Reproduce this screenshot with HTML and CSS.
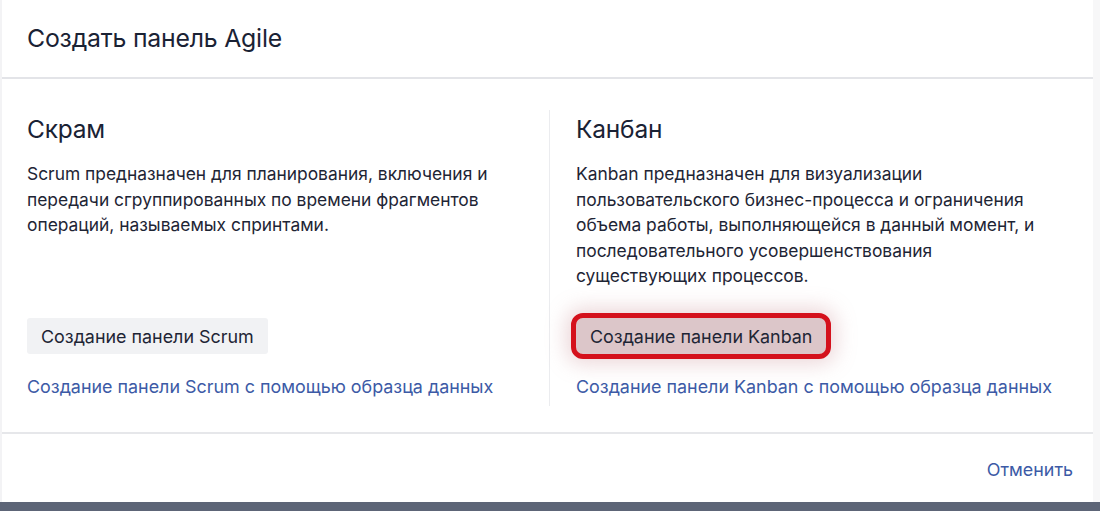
FILE: index.html
```html
<!DOCTYPE html>
<html lang="ru">
<head>
<meta charset="utf-8">
<link rel="stylesheet" href="styles.css">
</head>
<body>
<div class="page">
  <div class="modal">
    <header class="modal-header">
      <h1 class="modal-title">Создать панель Agile</h1>
    </header>
    <div class="modal-body">
      <section class="col col-left">
        <h2 class="col-title">Скрам</h2>
        <p class="col-text">Scrum предназначен для планирования, включения и передачи сгруппированных по времени фрагментов операций, называемых спринтами.</p>
        <div class="col-actions">
          <button class="btn">Создание панели Scrum</button>
          <a class="link" href="#">Создание панели Scrum с помощью образца данных</a>
        </div>
      </section>
      <section class="col col-right">
        <h2 class="col-title">Канбан</h2>
        <p class="col-text">Kanban предназначен для визуализации пользовательского бизнес-процесса и ограничения объема работы, выполняющейся в данный момент, и последовательного усовершенствования существующих процессов.</p>
        <div class="col-actions">
          <button class="btn btn-highlight">Создание панели Kanban</button>
          <a class="link" href="#">Создание панели Kanban с помощью образца данных</a>
        </div>
      </section>
    </div>
    <footer class="modal-footer">
      <a class="link cancel" href="#">Отменить</a>
    </footer>
  </div>
  <div class="backdrop-bar"></div>
</div>
</body>
</html>
```

FILE: styles.css
```css
* { box-sizing: border-box; }
html, body {
  margin: 0;
  padding: 0;
  background: #ffffff;
  font-family: Inter, "Liberation Sans", Arial, sans-serif;
  color: #172b4d;
}
.page {
  width: 1100px;
  height: 511px;
  display: flex;
  flex-direction: column;
  overflow: hidden;
  background: #f7f7f8;
}
.modal {
  width: 1093px;
  height: 502px;
  background: #ffffff;
  display: flex;
  flex-direction: column;
  border-left: 2px solid #f3f3f5;
}
.modal-header {
  height: 79px;
  padding: 0 0 0 25px;
  display: flex;
  align-items: center;
  border-bottom: 2px solid #e3e4e8;
}
.modal-title {
  margin: 0;
  font-size: 24.8px;
  font-weight: 400;
  letter-spacing: -0.2px;
  color: #1a2234;
  padding-bottom: 1px;
}
.modal-body {
  display: flex;
  height: 355px;
  padding: 31px 0 26px 25px;
  border-bottom: 2px solid #e6e7ea;
}
.col {
  display: flex;
  flex-direction: column;
}
.col-left {
  width: 523px;
  border-right: 1px solid #ebecef;
  padding-right: 27px;
}
.col-right {
  width: 532px;
  padding-left: 26px;
  padding-right: 26px;
}
.col-title {
  margin: 0;
  font-size: 24.5px;
  font-weight: 400;
  letter-spacing: -0.2px;
  color: #1a2234;
  line-height: 38px;
}
.col-text {
  margin: 13px 0 0;
  font-size: 17.4px;
  line-height: 25.5px;
  color: #1e2535;
}
.col-actions {
  margin-top: auto;
  display: flex;
  flex-direction: column;
  align-items: flex-start;
  gap: 22px;
  padding-bottom: 8px;
}
.btn {
  font-family: inherit;
  font-size: 17.9px;
  color: #1e2535;
  background: #f1f2f4;
  border: none;
  border-radius: 3px;
  height: 36px;
  padding: 0 14px;
}
.btn-highlight {
  background: #dcc6c9;
  outline: 5px solid #d4111c;
  outline-offset: 0;
  border-radius: 7px;
  box-shadow: 0 0 20px 10px rgba(200,140,145,0.35);
}
.link {
  font-size: 17.9px;
  line-height: 22px;
  color: #3c5aa6;
  text-decoration: none;
}
.modal-footer {
  flex: 1;
  display: flex;
  align-items: center;
  justify-content: flex-end;
  padding-right: 20px;
}
.cancel {
  padding-top: 4px;
}
.backdrop-bar {
  flex: 1;
  background: #5d6577;
}
```
